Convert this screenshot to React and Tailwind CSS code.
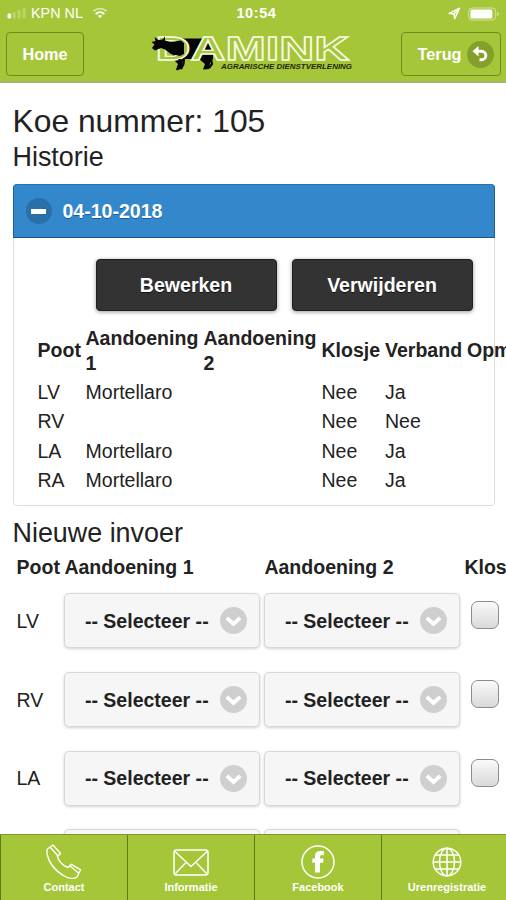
import React from "react";

const FONT = "font-['Liberation_Sans',Arial,sans-serif]";

function StatusBar() {
  return (
    <div className="flex h-[27px] items-center justify-between pl-[7px] pr-[6px] text-white">
      <div className="flex w-[200px] items-center">
        <svg width="20" height="12" viewBox="0 0 20 12" fill="#fff">
          <rect x="0.5" y="6.5" width="3.6" height="5" rx="1.3" />
          <rect x="5.5" y="5" width="3.2" height="6.5" rx="1" opacity="0.25" />
          <rect x="10.5" y="3" width="3.2" height="8.5" rx="1" opacity="0.25" />
          <rect x="15.5" y="1" width="3.2" height="10.5" rx="1" opacity="0.25" />
        </svg>
        <span className="ml-[4px] text-[14.3px] leading-none tracking-[0.05px]">KPN NL</span>
        <svg className="ml-[9px]" width="16" height="12" viewBox="0 0 16 12" fill="none" stroke="#fff">
          <path d="M1.4 4.2C5 .7 11 .7 14.6 4.2" strokeWidth="1.8" opacity="0.6" />
          <path d="M3.7 6.9C6.2 4.6 9.8 4.6 12.3 6.9" strokeWidth="2" />
          <path d="M8 11.3 5.6 8.8C7 7.6 9 7.6 10.4 8.8Z" fill="#fff" stroke="none" />
        </svg>
      </div>
      <span className="ml-[6px] text-[14.5px] leading-none font-bold tracking-[0.6px]">10:54</span>
      <div className="flex w-[200px] items-center justify-end">
        <svg width="13" height="13" viewBox="0 0 13 13" fill="none" stroke="#fff" strokeWidth="1.5" strokeLinejoin="round">
          <path d="M11.6 1.2 1.2 6.3 6 6.9 6.7 11.6Z" />
          <path d="M11.6 1.2 6 6.9" />
        </svg>
        <svg className="ml-[7px]" width="32" height="14" viewBox="0 0 32 14">
          <rect x="0.7" y="1" width="27" height="12" rx="3.4" fill="none" stroke="#fff" strokeWidth="0.9" opacity="0.6" />
          <rect x="2.4" y="2.6" width="22" height="8.8" rx="1.5" fill="#fff" />
          <path d="M29.4 5c2 .7 2 3.3 0 4z" fill="#fff" opacity="0.6" />
        </svg>
      </div>
    </div>
  );
}

function Logo() {
  return (
    <svg width="204" height="42" viewBox="0 0 204 42">
      <path
        d="M20 8 30 6.500 62 6.500 62 27 59 31 58 37 52 37.500 54 32 48 27 32 27 31 37 25 38 27 32 22 27Z"
        fill="#050505"
      />
      <text
        transform="translate(4.500 28) scale(1.425 1)"
        fontFamily="Liberation Sans, Arial, sans-serif"
        fontWeight="700"
        fontSize="34"
        fill="#a5c638"
        stroke="#f8fbe9"
        strokeWidth="1.3"
      >
        DAMINK
      </text>
      <path
        d="M0.500 10 4.500 9 3.500 5 7.500 8 11.500 7.500 14 4.500 14 8.500 20 10 30 8.500 33 11 33 22 29 24 20 22 14 17.500 10 16 4 18.500 1 16 3.500 12.500Z"
        fill="#050505"
      />
      <path d="M28.500 27 29 32 26 38M33 27 32.500 32 30 37M55 27 57.500 31 54 37M60 27 61 32 58 36" fill="none" stroke="#050505" strokeWidth="2.200" />
      <text
        x="70"
        y="37"
        textLength="131"
        lengthAdjust="spacingAndGlyphs"
        fontFamily="Liberation Sans, Arial, sans-serif"
        fontStyle="italic"
        fontWeight="700"
        fontSize="7"
        fill="#1d2606"
      >
        AGRARISCHE DIENSTVERLENING
      </text>
    </svg>
  );
}

function Header() {
  return (
    <header className="h-[83px] shrink-0 border-b-2 border-[#a3b36c] bg-[#a5c638]">
      <StatusBar />
      <div className="flex items-start justify-between pt-[5px] pr-[5px] pl-[6px] text-[16.3px] font-bold text-white">
        <button className="h-[44px] w-[78px] rounded-[4px] border border-[#6f8a20]">Home</button>
        <div className="ml-[21px]">
          <Logo />
        </div>
        <button className="flex h-[44px] w-[100px] items-center justify-between rounded-[4px] border border-[#6f8a20] pr-[6px] pl-[15.5px]">
          Terug
          <span className="flex size-[27px] items-center justify-center rounded-full bg-[#84a02b]">
            <svg width="19" height="19" viewBox="0 0 19 19">
              <path d="M5 6.200h5.500a4.300 4.300 0 0 1 0 8.600H8.500" fill="none" stroke="#fff" strokeWidth="2.900" />
              <path d="M1.500 6.200 7.500 1v10.400z" fill="#fff" />
            </svg>
          </span>
        </button>
      </div>
    </header>
  );
}

const HISTORY = [
  ["LV", "Mortellaro", "", "Nee", "Ja"],
  ["RV", "", "", "Nee", "Nee"],
  ["LA", "Mortellaro", "", "Nee", "Ja"],
  ["RA", "Mortellaro", "", "Nee", "Ja"],
];

const HISTORY_COLS = "grid grid-cols-[48px_118px_118px_63.5px_82px_60px]";

function DarkButton({ children }) {
  return (
    <button className="h-[52px] w-[181px] rounded-[4px] border border-[#1f1f1f] bg-[#333] font-bold text-white shadow-[0_1px_4px_rgba(0,0,0,0.4)] [text-shadow:0_1px_0_#111]">
      {children}
    </button>
  );
}

function HistoryCard() {
  return (
    <section className="mt-[11px] h-[322px] w-[482px] rounded-[4px] border border-[#dddddd]">
      <div className="-mx-px -mt-px flex h-[54px] items-center rounded-t-[4px] border border-[#1f5f99] border-t-[#2a73b1] border-b-[#17568f] bg-[#3388cc] pl-[12px] font-bold text-white">
        <span className="flex size-[26px] items-center justify-center rounded-full bg-[#2a70a8]">
          <span className="h-[5px] w-[15px] bg-white" />
        </span>
        <span className="ml-[11px] [text-shadow:0_1px_0_#1a5f9c]">04-10-2018</span>
      </div>
      <div className="mt-[21px] ml-[82px] flex gap-[15px]">
        <DarkButton>Bewerken</DarkButton>
        <DarkButton>Verwijderen</DarkButton>
      </div>
      <div className={`${HISTORY_COLS} mt-[15px] ml-[24px] items-center leading-[24.5px] font-bold`}>
        <span>Poot</span>
        <span>Aandoening 1</span>
        <span>Aandoening 2</span>
        <span>Klosje</span>
        <span>Verband</span>
        <span>Opmerking</span>
      </div>
      <div className="mt-[2.300px]">
        {HISTORY.map((row) => (
          <div key={row[0]} className={`${HISTORY_COLS} ml-[24px] h-[29.4px] items-center`}>
            {row.map((cell, i) => (
              <span key={i}>{cell}</span>
            ))}
          </div>
        ))}
      </div>
    </section>
  );
}

function Select() {
  return (
    <div className="mr-[4px] flex h-[55px] items-center justify-between rounded-[5px] border border-[#d8d8d8] bg-[#f6f6f6] pr-[12px] pl-[19.500px] font-bold whitespace-nowrap shadow-[0_1px_3px_rgba(0,0,0,0.18)]">
      -- Selecteer --
      <span className="flex size-[27px] items-center justify-center rounded-full bg-[#cfcfcf]">
        <svg width="17" height="17" viewBox="0 0 17 17" fill="none" stroke="#fff" strokeWidth="3.8">
          <path d="M1.8 5.8 8.5 12l6.7-6.2" />
        </svg>
      </span>
    </div>
  );
}

const ENTRY_COLS = "grid grid-cols-[47.900px_200px_200px_80px]";

function EntryForm() {
  return (
    <section className="ml-[4px]">
      <div className={`${ENTRY_COLS} mt-[5px] h-[26px] items-center font-bold`}>
        <span>Poot</span>
        <span>Aandoening 1</span>
        <span>Aandoening 2</span>
        <span>Klosje</span>
      </div>
      <div className="mt-[1.500px]">
        {["LV", "RV", "LA", "RA"].map((leg) => (
          <div key={leg} className={`${ENTRY_COLS} h-[78.7px] items-center`}>
            <span>{leg}</span>
            <Select />
            <Select />
            <span className="mb-[11px] ml-[7px] size-[28px] rounded-[7px] border-[1.5px] border-[#8c8c8c] bg-linear-to-b from-[#fafafa] to-[#d9d9d9]" />
          </div>
        ))}
      </div>
    </section>
  );
}

function PhoneIcon() {
  return (
    <svg width="36" height="36" viewBox="0 0 36 36" fill="none" stroke="#fff" strokeWidth="1.4" strokeLinejoin="round">
      <path d="M1.500 5 7 1 14.500 9.500 11.500 12.500C12 16.500 17 22 22 23.500L25.500 20.300 34.500 25.800 31 33C28 35.300 22 34.800 17 31.300 9 26.300 3 19 1.200 10.500 .8 8 .9 6 1.500 5Z" />
      <path d="M4.500 3.500 12 12M24 22l8.500 7" />
    </svg>
  );
}

function MailIcon() {
  return (
    <svg width="36" height="27" viewBox="0 0 36 27" fill="none" stroke="#fff" strokeWidth="1.5" strokeLinejoin="round">
      <rect x="1" y="1" width="34" height="25" rx="2.5" />
      <path d="M2 2.500 18 17.500 34 2.500M2.500 24.500 12.500 14M33.500 24.500 23.500 14" />
    </svg>
  );
}

function FacebookIcon() {
  return (
    <svg width="34" height="34" viewBox="0 0 34 34">
      <circle cx="17" cy="17" r="16" fill="none" stroke="#fff" strokeWidth="1.5" />
      <path d="M14 27.500V17.800H11.300V13.500H14V11C14 7.500 16 6 19.200 6H22.800V10.200H20.500C19.300 10.200 18.900 10.800 18.900 11.800V13.500H22.600L22 17.800H18.900V27.500Z" fill="#fff" />
    </svg>
  );
}

function GlobeIcon() {
  return (
    <svg width="30" height="30" viewBox="0 0 30 30" fill="none" stroke="#fff" strokeWidth="1.5">
      <circle cx="15" cy="15" r="13.800" />
      <ellipse cx="15" cy="15" rx="7.500" ry="13.800" />
      <path d="M15 1v28M1 15h28M3.500 8h23M3.500 22h23" />
    </svg>
  );
}

const TABS = [
  { label: "Contact", Icon: PhoneIcon },
  { label: "Informatie", Icon: MailIcon },
  { label: "Facebook", Icon: FacebookIcon },
  { label: "Urenregistratie", Icon: GlobeIcon },
];

function TabBar() {
  return (
    <footer className="grid h-[66px] shrink-0 grid-cols-[127px_127px_127px_131px] border-t border-[#7f9a29] bg-[#a5c638] text-white">
      {TABS.map(({ label, Icon }) => (
        <div key={label} className="flex flex-col items-center border-l border-[#5f7a18]">
          <div className="flex h-[45px] items-center pt-[9px]">
            <Icon />
          </div>
          <span className="text-[11px] leading-[14px] font-bold">{label}</span>
        </div>
      ))}
    </footer>
  );
}

export default function App() {
  return (
    <div className={`flex h-[900px] w-[506px] flex-col overflow-hidden bg-white text-[19.55px] leading-[24px] text-[#222] ${FONT}`}>
      <Header />
      <main className="min-h-0 flex-1 overflow-hidden pt-[20px] pl-[12.5px]">
        <h1 className="text-[31.8px] leading-[36px]">Koe nummer: 105</h1>
        <h2 className="mt-[2px] text-[26.9px] leading-[32px]">Historie</h2>
        <HistoryCard />
        <h2 className="mt-[11px] text-[26.9px] leading-[32px]">Nieuwe invoer</h2>
        <EntryForm />
      </main>
      <TabBar />
    </div>
  );
}
